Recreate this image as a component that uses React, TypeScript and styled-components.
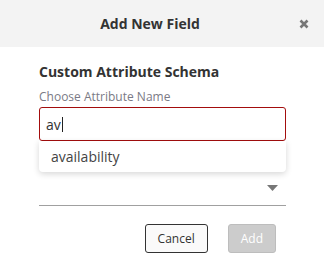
import styled, { createGlobalStyle } from "styled-components";

const GlobalStyle = createGlobalStyle`
  html, body {
    margin: 0;
    padding: 0;
    background: #ffffff;
  }
  body {
    font-family: "Open Sans", "Liberation Sans", sans-serif;
    color: #333333;
  }
  * {
    box-sizing: border-box;
  }
`;

export default function App() {
  return (
    <>
      <GlobalStyle />
      <Modal>
        <Header>
          <Title>Add New Field</Title>
          <CloseBtn aria-label="close">
            <svg width="10" height="10" viewBox="0 0 10 10">
              <path
                d="M1.5 1.5 L8.5 8.5 M8.5 1.5 L1.5 8.5"
                stroke="#777"
                strokeWidth="2.6"
                strokeLinecap="butt"
              />
            </svg>
          </CloseBtn>
        </Header>
        <Body>
          <Heading>Custom Attribute Schema</Heading>
          <Label>Choose Attribute Name</Label>
          <Combo>
            <TextField>
              av
              <Caret />
            </TextField>
            <Suggestions>
              <Suggestion>availability</Suggestion>
            </Suggestions>
          </Combo>
          <SelectRow>
            <svg width="11" height="6" viewBox="0 0 11 6">
              <path d="M0 0 L11 0 L5.5 6 Z" fill="#777" />
            </svg>
          </SelectRow>
          <Actions>
            <Button>Cancel</Button>
            <Button $primary disabled>
              Add
            </Button>
          </Actions>
        </Body>
      </Modal>
    </>
  );
}

const Modal = styled.div`
  width: 324px;
  height: 277px;
  background: #ffffff;
  display: flex;
  flex-direction: column;
`;

const Header = styled.div`
  display: flex;
  align-items: center;
  height: 47px;
  background: #f3f3f3;
  padding-left: 10px;
  padding-right: 6px;
`;

const Title = styled.h2`
  flex: 1;
  margin: 0;
  text-align: center;
  font-size: 14px;
  font-weight: 700;
  color: #333333;
`;

const CloseBtn = styled.button`
  display: flex;
  align-items: center;
  justify-content: center;
  width: 28px;
  height: 28px;
  padding: 0;
  border: none;
  background: none;
  cursor: pointer;
`;

const Body = styled.div`
  display: flex;
  flex-direction: column;
  padding: 15px 38px 0 39px;
`;

const Heading = styled.h3`
  margin: 0 0 7px;
  font-size: 14px;
  line-height: 20px;
  font-weight: 700;
  color: #333333;
`;

const Label = styled.label`
  margin-bottom: 2px;
  font-size: 12px;
  line-height: 16px;
  color: #7a7a85;
`;

const Combo = styled.div`
  position: relative;
`;

const TextField = styled.div`
  display: flex;
  align-items: center;
  height: 34px;
  padding-left: 6px;
  border: 1px solid #a30d0d;
  border-radius: 3px;
  font-size: 14px;
  color: #333333;
`;

const Caret = styled.span`
  display: inline-block;
  width: 1px;
  height: 15px;
  margin-left: 1px;
  background: #222222;
`;

const Suggestions = styled.ul`
  position: absolute;
  top: 100%;
  left: 0;
  right: 0;
  margin: 0;
  padding: 0;
  list-style: none;
  background: #ffffff;
  border-radius: 0 0 4px 4px;
  box-shadow: 0 2px 6px rgba(0, 0, 0, 0.16);
  z-index: 2;
`;

const Suggestion = styled.li`
  height: 31px;
  display: flex;
  align-items: center;
  padding-left: 12px;
  font-size: 14px;
  color: #444444;
`;

const SelectRow = styled.div`
  display: flex;
  align-items: flex-end;
  justify-content: flex-end;
  height: 65px;
  padding: 0 8px 14px 0;
  border-bottom: 1px solid #a0a0a0;
`;

const Actions = styled.div`
  display: flex;
  justify-content: flex-end;
  gap: 20px;
  margin-top: 18px;
  padding-right: 10px;
`;

const Button = styled.button<{ $primary?: boolean }>`
  height: 29px;
  padding: 0 12px;
  border-radius: 3px;
  font-family: "Open Sans", "Liberation Sans", sans-serif;
  font-size: 12px;
  border: 1px solid ${(p) => (p.$primary ? "#bdbdbd" : "#333333")};
  background: ${(p) => (p.$primary ? "#cccccc" : "#fafafa")};
  color: ${(p) => (p.$primary ? "#ffffff" : "#333333")};
  cursor: pointer;
`;
